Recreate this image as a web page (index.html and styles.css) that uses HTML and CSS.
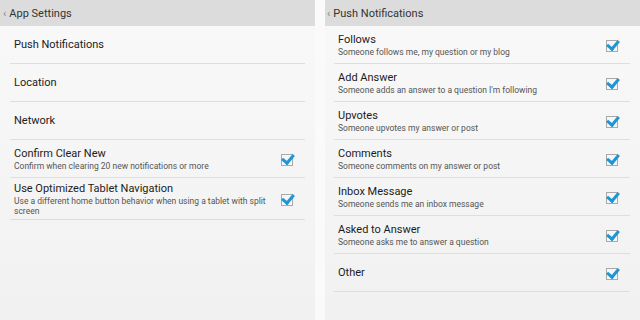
FILE: index.html
```html
<!DOCTYPE html>
<html lang="en">
<head>
  <meta charset="UTF-8">
  <title>Settings</title>
  <link rel="stylesheet" href="styles.css">
</head>
<body>
  <div class="screens">
    <!-- App settings -->
    <section class="pane">
      <header><span class="back">&lsaquo;</span>App Settings</header>
      <ul class="list">
        <li class="item"><div class="text"><div class="title">Push Notifications</div></div></li>
        <li class="item"><div class="text"><div class="title">Location</div></div></li>
        <li class="item"><div class="text"><div class="title">Network</div></div></li>
        <li class="item">
          <div class="text">
            <div class="title">Confirm Clear New</div>
            <div class="sub">Confirm when clearing 20 new notifications or more</div>
          </div>
          <span class="check"></span>
        </li>
        <li class="item tall">
          <div class="text">
            <div class="title">Use Optimized Tablet Navigation</div>
            <div class="sub">Use a different home button behavior when using a tablet with split screen</div>
          </div>
          <span class="check"></span>
        </li>
      </ul>
    </section>

    <!-- Push notifications -->
    <section class="pane right">
      <header><span class="back">&lsaquo;</span>Push Notifications</header>
      <ul class="list">
        <li class="item">
          <div class="text"><div class="title">Follows</div><div class="sub">Someone follows me, my question or my blog</div></div>
          <span class="check"></span>
        </li>
        <li class="item">
          <div class="text"><div class="title">Add Answer</div><div class="sub">Someone adds an answer to a question I'm following</div></div>
          <span class="check"></span>
        </li>
        <li class="item">
          <div class="text"><div class="title">Upvotes</div><div class="sub">Someone upvotes my answer or post</div></div>
          <span class="check"></span>
        </li>
        <li class="item">
          <div class="text"><div class="title">Comments</div><div class="sub">Someone comments on my answer or post</div></div>
          <span class="check"></span>
        </li>
        <li class="item">
          <div class="text"><div class="title">Inbox Message</div><div class="sub">Someone sends me an inbox message</div></div>
          <span class="check"></span>
        </li>
        <li class="item">
          <div class="text"><div class="title">Asked to Answer</div><div class="sub">Someone asks me to answer a question</div></div>
          <span class="check"></span>
        </li>
        <li class="item">
          <div class="text"><div class="title">Other</div></div>
          <span class="check"></span>
        </li>
      </ul>
    </section>
  </div>
</body>
</html>
```

FILE: styles.css
```css
html, body {margin:0; padding:0; height:100%;}
body {font-family: Roboto, "Liberation Sans", sans-serif; background:#fafafa; color:#222;}
.screens {display:flex; gap:10px; height:320px;}
.pane {background:linear-gradient(#f9f9f9, #f1f1f1); height:320px;}
.pane:first-child {width:315px;}
.pane.right {flex:1;}
header {height:26px; line-height:27px; background:#dcdcdc; color:#333; font-size:11px; padding-left:3px;}
.right header {padding-left:2px;}
.back {color:#888; font-size:11px; margin-right:3px;}
.list {list-style:none; margin:0; padding:0 10px 0 10px;}
.right .list {padding:0 10px 0 9px;}
.item {display:flex; align-items:center; height:37px; border-bottom:1px solid #dedede; padding:0 12px 0 4px;}
.item.tall {height:41px;}
.text {flex:1;}
.title {font-size:11px; color:#1c1c1c; line-height:14px;}
.sub {font-size:8.5px; color:#555; line-height:10px; padding-right:10px;}
/* checkbox with blue tick */
.check {position:relative; width:10px; height:10px; border:1px solid #a9a9a9; background:#f6f6f6; margin-top:2px; flex:0 0 auto;}
.check::after {content:""; position:absolute; left:2px; top:-3px; width:5px; height:9px; border:solid #1e96d6; border-width:0 3px 3px 0; transform:rotate(40deg);}
```
